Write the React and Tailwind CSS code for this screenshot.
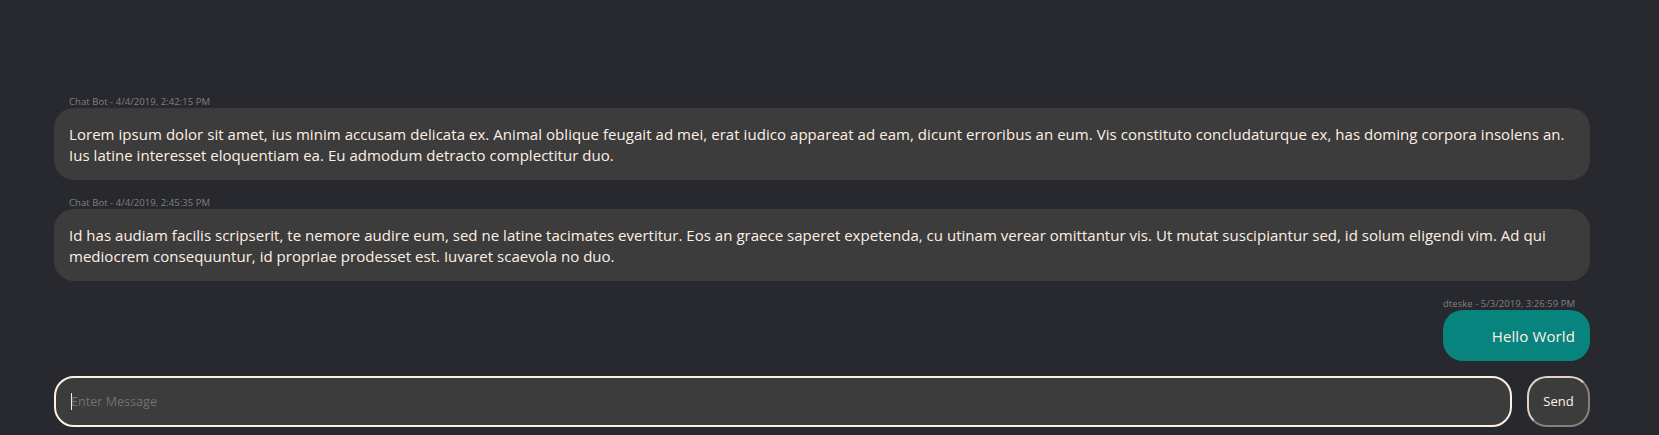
const messages = [
  {
    meta: "Chat Bot - 4/4/2019, 2:42:15 PM",
    lines: [
      {
        text: "Lorem ipsum dolor sit amet, ius minim accusam delicata ex. Animal oblique feugait ad mei, erat iudico appareat ad eam, dicunt erroribus an eum. Vis constituto concludaturque ex, has doming corpora insolens an.",
        tracking: "tracking-[0.051px]",
      },
      {
        text: "Ius latine interesset eloquentiam ea. Eu admodum detracto complectitur duo.",
        tracking: "tracking-[0.035px]",
      },
    ],
  },
  {
    meta: "Chat Bot - 4/4/2019, 2:45:35 PM",
    lines: [
      {
        text: "Id has audiam facilis scripserit, te nemore audire eum, sed ne latine tacimates evertitur. Eos an graece saperet expetenda, cu utinam verear omittantur vis. Ut mutat suscipiantur sed, id solum eligendi vim. Ad qui",
        tracking: "tracking-[0.025px]",
      },
      {
        text: "mediocrem consequuntur, id propriae prodesset est. Iuvaret scaevola no duo.",
        tracking: "tracking-[0.025px]",
      },
    ],
  },
  {
    own: true,
    meta: "dteske - 5/3/2019, 3:26:59 PM",
    lines: [{ text: "Hello World", tracking: "tracking-[0.12px]" }],
  },
];

function Message({ meta, lines, own }) {
  return (
    <div className={own ? "w-[147px] self-end" : "w-full"}>
      <div
        className={`h-3.5 whitespace-nowrap pr-[15px] text-[9.5px] leading-[15px] tracking-[0.05px] text-[#82807e] ${own ? "text-right" : "pl-[15px]"}`}
      >
        {meta}
      </div>
      <div className={`rounded-[20px] px-[15px] pb-3.5 pt-4 ${own ? "bg-[#07847d] text-right" : "bg-[#3c3c3c]"}`}>
        {lines.map((line) => (
          <p key={line.text} className={`whitespace-nowrap text-[15px] leading-[21px] ${line.tracking}`}>
            {line.text}
          </p>
        ))}
      </div>
    </div>
  );
}

export default function App() {
  return (
    <div className="flex h-[435px] w-full flex-col bg-[#28292e] pl-[54px] pr-[69px] pt-[94px] font-['Open_Sans','Noto_Sans',sans-serif] text-[#fff0e4]">
      <div className="flex flex-col gap-[15px]">
        {messages.map((m) => (
          <Message key={m.meta} {...m} />
        ))}
      </div>
      <div className="mt-[15px] flex h-[51px] gap-[15px]">
        <div className="flex flex-1 items-center rounded-[20px] border-2 border-[#fff0e4] bg-[#3c3c3c] px-[15px]">
          <span className="h-[17px] w-px bg-[#fff0e4]" />
          <span className="-ml-px text-[12.5px] leading-[17px] tracking-[0.05px] text-[#75706b]">Enter Message</span>
        </div>
        <button className="w-[63px] rounded-[20px] border-2 border-b-[#898079] border-l-[#e2d2c7] border-r-[#898079] border-t-[#e2d2c7] bg-[#3c3c3c] text-[13px] leading-[17px]">
          Send
        </button>
      </div>
    </div>
  );
}
